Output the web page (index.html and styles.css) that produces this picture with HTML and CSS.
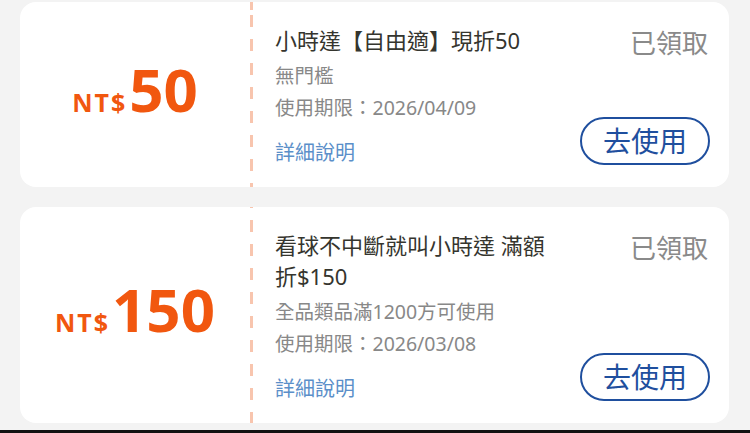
FILE: index.html
```html
<!DOCTYPE html>
<html lang="zh-Hant">
<head>
    <meta charset="UTF-8">
    <meta name="viewport" content="width=device-width, initial-scale=1.0">
    <title>我的優惠券</title>
    <link rel="stylesheet" href="styles.css">
</head>
<body>
    <div class="page">
        <div class="coupon-list">
            <div class="coupon">
                <div class="coupon-amount">
                    <span class="currency">NT$</span><span class="value">50</span>
                </div>
                <div class="coupon-divider"></div>
                <div class="coupon-body">
                    <div class="coupon-info">
                        <div class="coupon-title">小時達【自由適】現折50</div>
                        <div class="coupon-cond">無門檻</div>
                        <div class="coupon-date">使用期限：2026/04/09</div>
                        <a class="coupon-more" href="#">詳細說明</a>
                    </div>
                    <div class="coupon-side">
                        <span class="coupon-status">已領取</span>
                        <button class="use-btn">去使用</button>
                    </div>
                </div>
            </div>

            <div class="coupon">
                <div class="coupon-amount">
                    <span class="currency">NT$</span><span class="value">150</span>
                </div>
                <div class="coupon-divider"></div>
                <div class="coupon-body">
                    <div class="coupon-info">
                        <div class="coupon-title">看球不中斷就叫小時達 滿額折$150</div>
                        <div class="coupon-cond">全品類品滿1200方可使用</div>
                        <div class="coupon-date">使用期限：2026/03/08</div>
                        <a class="coupon-more" href="#">詳細說明</a>
                    </div>
                    <div class="coupon-side">
                        <span class="coupon-status">已領取</span>
                        <button class="use-btn">去使用</button>
                    </div>
                </div>
            </div>
        </div>
        <div class="nav-edge"></div>
    </div>
</body>
</html>
```

FILE: styles.css
```css
body {
    font-family: "Noto Sans", "Noto Sans CJK TC", sans-serif;
    margin: 0;
    background-color: #f3f3f3;
}

.page {
    height: 433px;
    display: flex;
    flex-direction: column;
    overflow: hidden;
}

.coupon-list {
    display: flex;
    flex-direction: column;
    gap: 20px;
    padding: 2px 21px 0 20px;
}

.coupon {
    display: flex;
    background-color: white;
    border-radius: 16px;
}

.coupon-amount {
    width: 230px;
    display: flex;
    justify-content: center;
    align-items: baseline;
    padding-bottom: 12px;
    align-self: center;
    color: #f1570f;
    font-weight: 700;
}

.coupon-amount .currency {
    font-size: 25px;
    letter-spacing: 2px;
    margin-right: 2px;
}

.coupon-amount .value {
    font-size: 60px;
    line-height: 1;
}

.coupon-divider {
    width: 3px;
    background: repeating-linear-gradient(to bottom, #f8c5ae 0 12px, transparent 12px 24px);
    background-position: 0 13px;
}

.coupon-body {
    flex: 1;
    display: flex;
    gap: 24px;
    padding: 23px 19px 18px 22px;
}

.coupon-info {
    flex: 1;
    display: flex;
    flex-direction: column;
    align-items: flex-start;
}

.coupon-title {
    font-size: 22px;
    line-height: 31px;
    color: #35352e;
}

.coupon-cond, .coupon-date {
    font-size: 19.5px;
    line-height: 32px;
    color: #888;
}

.coupon-cond {
    margin-top: 4px;
}

.coupon-more {
    margin-top: 13px;
    font-size: 20px;
    line-height: 32px;
    color: #5b8fc9;
    text-decoration: none;
}

.coupon-side {
    width: 130px;
    display: flex;
    flex-direction: column;
    justify-content: space-between;
    align-items: flex-end;
}

.coupon-status {
    font-size: 26px;
    line-height: 36px;
    color: #8a8a8a;
    margin-right: 2px;
}

.use-btn {
    width: 130px;
    height: 48px;
    margin-bottom: 4px;
    padding: 0;
    border: 2px solid #1f4f9e;
    border-radius: 24px;
    background-color: white;
    color: #1f4f9e;
    font-family: inherit;
    font-size: 28px;
    line-height: 1;
    cursor: pointer;
}

.nav-edge {
    height: 3px;
    margin-top: auto;
    background-color: #111;
}
```
